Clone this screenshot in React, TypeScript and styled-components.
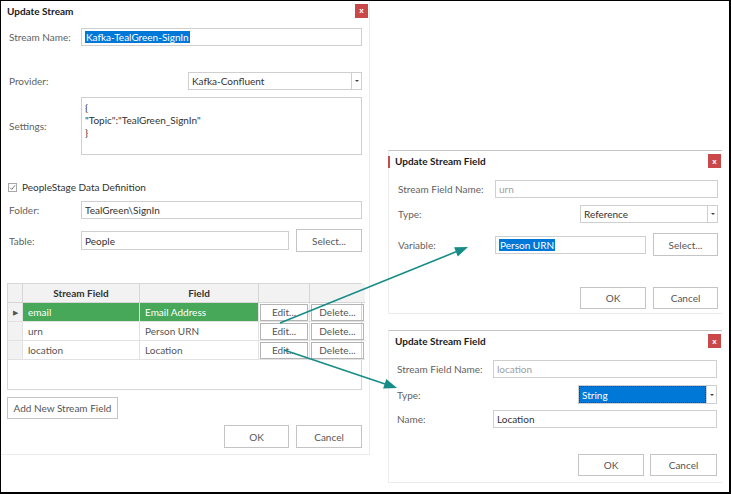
import React from 'react'
import styled, { createGlobalStyle } from 'styled-components'

const GlobalStyle = createGlobalStyle`
  html, body {
    margin: 0;
    padding: 0;
    background: #ffffff;
  }
`

const Screen = styled.div`
  position: relative;
  width: 731px;
  height: 494px;
  box-sizing: border-box;
  border-style: solid;
  border-color: #000000;
  border-width: 1px 2px 2px 1px;
  background: #ffffff;
  display: flex;
  overflow: hidden;
  font-family: Lato, 'Open Sans', sans-serif;
  font-size: 10px;
  color: #555555;
`

const MainDialog = styled.div`
  width: 369px;
  height: 454px;
  box-sizing: border-box;
  border-right: 1px solid #ececec;
  border-bottom: 1px solid #ececec;
  display: flex;
  flex-direction: column;
`

const TitleBar = styled.div<{ $h: number }>`
  height: ${(p) => p.$h}px;
  display: flex;
  align-items: center;
  justify-content: space-between;
  padding: 0 1px 0 6px;
  position: relative;
`

const Title = styled.div`
  font-size: 10px;
  font-weight: 700;
  color: #1a1a1a;
`

const Accent = styled.span`
  position: absolute;
  left: -1px;
  top: 5px;
  width: 2px;
  height: 12px;
  background: #c94b4b;
`

const CloseBtn = styled.div`
  width: 13px;
  height: 14px;
  background: #c9494b;
  color: #ffffff;
  font-size: 8px;
  font-weight: 700;
  display: flex;
  align-items: center;
  justify-content: center;
  font-family: 'Liberation Sans', sans-serif;
`

const Body = styled.div<{ $pl: number; $pr: number }>`
  display: flex;
  flex-direction: column;
  padding: 0 ${(p) => p.$pr}px 0 ${(p) => p.$pl}px;
`

const Row = styled.div<{ $mt: number; $h: number; $label?: number }>`
  margin-top: ${(p) => p.$mt}px;
  height: ${(p) => p.$h}px;
  display: grid;
  grid-template-columns: ${(p) => p.$label ?? 72}px 1fr;
  align-items: center;
`

const Label = styled.div`
  color: #5f5f5f;
  white-space: nowrap;
`

const Field = styled.div<{ $h?: number; $muted?: boolean }>`
  height: ${(p) => p.$h ?? 18}px;
  box-sizing: border-box;
  border: 1px solid #cfcfcf;
  background: #ffffff;
  display: flex;
  align-items: center;
  padding-left: 3px;
  color: ${(p) => (p.$muted ? '#a0a0a0' : '#333333')};
  white-space: nowrap;
  overflow: hidden;
`

const Selected = styled.span`
  background: #0078d7;
  color: #ffffff;
  padding: 0 1px;
`

const SettingsBox = styled.div`
  height: 58px;
  box-sizing: border-box;
  border: 1px solid #cfcfcf;
  padding: 3px 3px;
  color: #333333;
  line-height: 12.5px;
`

const Inline = styled.div<{ $gap: number; $justify?: string }>`
  display: flex;
  align-items: center;
  gap: ${(p) => p.$gap}px;
  justify-content: ${(p) => p.$justify ?? 'flex-start'};
  height: 100%;
`

const Select = styled.div<{ $w: number; $h?: number }>`
  width: ${(p) => p.$w}px;
  height: ${(p) => p.$h ?? 18}px;
  box-sizing: border-box;
  border: 1px solid #cfcfcf;
  display: flex;
  background: #ffffff;
`

const SelectValue = styled.div<{ $active?: boolean }>`
  flex: 1;
  display: flex;
  align-items: center;
  padding-left: 3px;
  color: ${(p) => (p.$active ? '#ffffff' : '#333333')};
  background: ${(p) => (p.$active ? '#0078d7' : 'transparent')};
  outline: ${(p) => (p.$active ? '1px dotted #3a3a3a' : 'none')};
  outline-offset: -1px;
`

const SelectArrow = styled.div`
  width: 9px;
  border-left: 1px solid #cfcfcf;
  display: flex;
  align-items: center;
  justify-content: center;
  &::after {
    content: '';
    border-left: 2px solid transparent;
    border-right: 2px solid transparent;
    border-top: 2px solid #444444;
  }
`

const Button = styled.div<{ $w: number; $h: number }>`
  width: ${(p) => p.$w}px;
  height: ${(p) => p.$h}px;
  box-sizing: border-box;
  border: 1px solid #c4c4c4;
  background: #ffffff;
  color: #555555;
  display: flex;
  align-items: center;
  justify-content: center;
  white-space: nowrap;
  flex-shrink: 0;
`

const CheckRow = styled.div<{ $mt: number }>`
  margin-top: ${(p) => p.$mt}px;
  height: 14px;
  display: flex;
  align-items: center;
  gap: 5px;
  margin-left: -1px;
  color: #333333;
`

const CheckBox = styled.div`
  width: 9px;
  height: 9px;
  box-sizing: border-box;
  border: 1px solid #a8a8a8;
  display: flex;
  align-items: center;
  justify-content: center;
`

const GridBox = styled.div<{ $mt: number }>`
  margin-top: ${(p) => p.$mt}px;
  margin-left: -2px;
  height: 107px;
  box-sizing: border-box;
  border: 1px solid #d6d6d6;
`

const Table = styled.table`
  border-collapse: collapse;
  width: 100%;
  table-layout: fixed;
`

const Th = styled.th<{ $w: number }>`
  width: ${(p) => p.$w}px;
  height: 18px;
  padding: 0;
  background: #f2f2f2;
  border-right: 1px solid #d6d6d6;
  border-bottom: 1px solid #d6d6d6;
  font-weight: 700;
  color: #333333;
  text-align: center;
  &:last-child {
    border-right: none;
  }
`

const Td = styled.td<{ $green?: boolean; $indicator?: boolean }>`
  height: 18px;
  padding: 0 0 0 ${(p) => (p.$indicator ? 0 : 5)}px;
  border-right: 1px solid #e2e2e2;
  border-bottom: 1px solid #e2e2e2;
  background: ${(p) => (p.$green ? '#47a85a' : p.$indicator ? '#f2f2f2' : '#ffffff')};
  color: ${(p) => (p.$green ? '#ffffff' : '#555555')};
  white-space: nowrap;
  overflow: hidden;
  text-align: ${(p) => (p.$indicator ? 'center' : 'left')};
  font-size: ${(p) => (p.$indicator ? '7px' : '10px')};
  &:last-child {
    border-right: none;
  }
`

const BtnCell = styled.td`
  height: 18px;
  padding: 0 1px;
  border-right: 1px solid #e2e2e2;
  border-bottom: 1px solid #e2e2e2;
  &:last-child {
    border-right: none;
  }
`

const CellButton = styled.div`
  height: 17px;
  box-sizing: border-box;
  border: 1px solid #b4b4b4;
  display: flex;
  align-items: center;
  justify-content: center;
  color: #555555;
`

const SideColumn = styled.div`
  margin-left: 18px;
  width: 334px;
  display: flex;
  flex-direction: column;
`

const FieldDialog = styled.div<{ $mt: number; $h: number }>`
  margin-top: ${(p) => p.$mt}px;
  height: ${(p) => p.$h}px;
  box-sizing: border-box;
  border-top: 1px solid #c4c4c4;
  border-left: 1px solid #ececec;
  border-bottom: 1px solid #ececec;
  display: flex;
  flex-direction: column;
`

const Overlay = styled.svg`
  position: absolute;
  left: -1px;
  top: -1px;
  pointer-events: none;
`

const streamRows = [
  { name: 'email', field: 'Email Address', current: true },
  { name: 'urn', field: 'Person URN', current: false },
  { name: 'location', field: 'Location', current: false },
]

const Arrows = () => (
  <Overlay width={731} height={494} viewBox="0 0 731 494">
    <g stroke="#178c87" strokeWidth={1.6} fill="#178c87">
      <line x1={280} y1={323} x2={456} y2={251.8} />
      <polygon points="468,247 457.8,256.5 454.1,247.2" stroke="none" />
      <line x1={284} y1={350} x2={385} y2={384} />
      <polygon points="397,388 383.1,388.6 386.3,379.1" stroke="none" />
    </g>
  </Overlay>
)

export default function App() {
  return (
    <>
      <GlobalStyle />
      <Screen>
        <MainDialog>
          <TitleBar $h={19}>
            <Title>Update Stream</Title>
            <CloseBtn>x</CloseBtn>
          </TitleBar>
          <Body $pl={8} $pr={7}>
            <Row $mt={8} $h={18}>
              <Label>Stream Name:</Label>
              <Field>
                <Selected>Kafka-TealGreen-SignIn</Selected>
              </Field>
            </Row>
            <Row $mt={26} $h={18}>
              <Label>Provider:</Label>
              <Inline $gap={0} $justify="flex-end">
                <Select $w={174}>
                  <SelectValue>Kafka-Confluent</SelectValue>
                  <SelectArrow />
                </Select>
              </Inline>
            </Row>
            <Row $mt={7} $h={58}>
              <Label>Settings:</Label>
              <SettingsBox>
                {'{'}
                <br />
                "Topic":"TealGreen_SignIn"
                <br />
                {'}'}
              </SettingsBox>
            </Row>
            <CheckRow $mt={25}>
              <CheckBox>
                <svg width="7" height="7" viewBox="0 0 7 7">
                  <path d="M1 3.6 L2.8 5.4 L6 1.4" stroke="#7a7a7a" strokeWidth="1" fill="none" />
                </svg>
              </CheckBox>
              PeopleStage Data Definition
            </CheckRow>
            <Row $mt={7} $h={18}>
              <Label>Folder:</Label>
              <Field>TealGreen\SignIn</Field>
            </Row>
            <Row $mt={10} $h={23}>
              <Label>Table:</Label>
              <Inline $gap={7}>
                <Field $h={19} style={{ flex: 1 }}>
                  People
                </Field>
                <Button $w={66} $h={23}>
                  Select...
                </Button>
              </Inline>
            </Row>
            <GridBox $mt={31}>
              <Table>
                <thead>
                  <tr>
                    <Th $w={14} />
                    <Th $w={116}>Stream Field</Th>
                    <Th $w={118}>Field</Th>
                    <Th $w={50} />
                    <Th $w={55} />
                  </tr>
                </thead>
                <tbody>
                  {streamRows.map((r) => (
                    <tr key={r.name}>
                      <Td $indicator>{r.current ? '▶' : ''}</Td>
                      <Td $green={r.current}>{r.name}</Td>
                      <Td $green={r.current}>{r.field}</Td>
                      <BtnCell>
                        <CellButton>Edit...</CellButton>
                      </BtnCell>
                      <BtnCell>
                        <CellButton>Delete...</CellButton>
                      </BtnCell>
                    </tr>
                  ))}
                </tbody>
              </Table>
            </GridBox>
            <Inline $gap={0} style={{ marginTop: 7, height: 22, marginLeft: -2 }}>
              <Button $w={111} $h={22}>
                Add New Stream Field
              </Button>
            </Inline>
            <Inline $gap={7} $justify="flex-end" style={{ marginTop: 6, height: 23 }}>
              <Button $w={65} $h={23}>
                OK
              </Button>
              <Button $w={66} $h={23}>
                Cancel
              </Button>
            </Inline>
          </Body>
        </MainDialog>

        <SideColumn>
          <FieldDialog $mt={149} $h={164}>
            <TitleBar $h={20}>
              <Accent />
              <Title>Update Stream Field</Title>
              <CloseBtn>x</CloseBtn>
            </TitleBar>
            <Body $pl={9} $pr={4}>
              <Row $mt={9} $h={18} $label={97}>
                <Label>Stream Field Name:</Label>
                <Field $muted>urn</Field>
              </Row>
              <Row $mt={7} $h={18} $label={97}>
                <Label>Type:</Label>
                <Inline $gap={0} $justify="flex-end">
                  <Select $w={138}>
                    <SelectValue>Reference</SelectValue>
                    <SelectArrow />
                  </Select>
                </Inline>
              </Row>
              <Row $mt={10} $h={23} $label={97}>
                <Label>Variable:</Label>
                <Inline $gap={7}>
                  <Field style={{ flex: 1 }}>
                    <Selected>Person URN</Selected>
                  </Field>
                  <Button $w={65} $h={23}>
                    Select...
                  </Button>
                </Inline>
              </Row>
              <Inline $gap={7} $justify="flex-end" style={{ marginTop: 31, height: 22 }}>
                <Button $w={66} $h={22}>
                  OK
                </Button>
                <Button $w={65} $h={22}>
                  Cancel
                </Button>
              </Inline>
            </Body>
          </FieldDialog>

          <FieldDialog $mt={16} $h={153}>
            <TitleBar $h={20}>
              <Title>Update Stream Field</Title>
              <CloseBtn>x</CloseBtn>
            </TitleBar>
            <Body $pl={8} $pr={5}>
              <Row $mt={9} $h={18} $label={96}>
                <Label>Stream Field Name:</Label>
                <Field $muted>location</Field>
              </Row>
              <Row $mt={7} $h={19} $label={96}>
                <Label>Type:</Label>
                <Inline $gap={0} $justify="flex-end">
                  <Select $w={139} $h={19}>
                    <SelectValue $active>String</SelectValue>
                    <SelectArrow />
                  </Select>
                </Inline>
              </Row>
              <Row $mt={6} $h={18} $label={96}>
                <Label>Name:</Label>
                <Field>Location</Field>
              </Row>
              <Inline $gap={6} $justify="flex-end" style={{ marginTop: 26, height: 22 }}>
                <Button $w={66} $h={22}>
                  OK
                </Button>
                <Button $w={67} $h={22}>
                  Cancel
                </Button>
              </Inline>
            </Body>
          </FieldDialog>
        </SideColumn>

        <Arrows />
      </Screen>
    </>
  )
}
